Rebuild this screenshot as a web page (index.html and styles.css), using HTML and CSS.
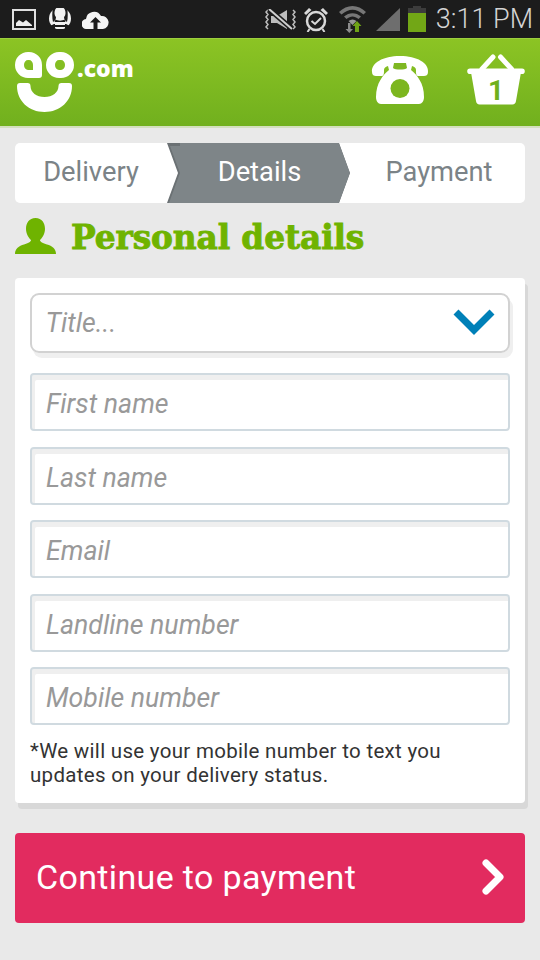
FILE: index.html
```html
<!DOCTYPE html>
<html lang="en">
<head>
<meta charset="utf-8">
<title>Personal details</title>
<link rel="stylesheet" href="styles.css">
</head>
<body>
<div class="status">
  <div class="status-left">
    <svg class="ic-pic" viewBox="0 0 24 21"><rect x="1" y="1" width="22" height="19" fill="none" stroke="#e0e0e0" stroke-width="2"/><path d="M4 17v-3l3-3 4 2.500 3-2.500 6 5v1z" fill="#eee"/></svg>
    <svg class="ic-voice" viewBox="0 0 24 21"><circle cx="12" cy="10.500" r="11" fill="#f2f2f2"/><path d="M5 0h3c-2 3-2 7 0 9 0 2-1 4-3 5-1-4-1-10 0-14zM19 0h-3c2 3 2 7 0 9 0 2 1 4 3 5 1-4 1-10 0-14z" fill="#1c1c1c"/><path d="M7.500 11.500c2 1.500 7 1.500 9 0l1 2.500H6.500z" fill="#1c1c1c"/><path d="M0 19l6-3h1v5H2zM24 19l-6-3h-1v5h5z" fill="#1c1c1c"/><path d="M6 17h12v2H6z" fill="#1c1c1c"/></svg>
    <svg class="ic-up" viewBox="0 0 27 19"><path d="M5 19a5 5 0 0 1-1-10 8 8 0 0 1 15-3 6.500 6.500 0 0 1 2 13z" fill="#f4f4f4"/><path d="M13.500 7l-5.500 5.500h3.500V19h4v-6.500H19z" fill="#1c1c1c"/></svg>
  </div>
  <div class="status-right">
    <svg class="ic-mute" viewBox="0 0 31 21"><path d="M3 1L1 3l2 2.500L1 8l2 2.500L1 13l2 2.500L1 18l2 2M28 1l2 2-2 2.500L30 8l-2 2.500 2 2.500-2 2.500 2 2.500-2 2" fill="none" stroke="#bdbdbd" stroke-width="1.500"/><path d="M6 7h6l10-6v19L12 14H6z" fill="#bdbdbd"/><path d="M4 0l23 20" stroke="#1c1c1c" stroke-width="5"/><path d="M4 0l23 20" stroke="#cfcfcf" stroke-width="2"/></svg>
    <svg class="ic-alarm" viewBox="0 0 24 24"><circle cx="12" cy="13" r="9" fill="none" stroke="#d8d8d8" stroke-width="2.500"/><path d="M7.500 13l3.500 3 6-6" fill="none" stroke="#d8d8d8" stroke-width="2"/><path d="M0 5l5-5 2.500 2-5.500 5zM24 5l-5-5-2.500 2 5.500 5z" fill="#d8d8d8"/><path d="M5.500 21l-2 3M18.500 21l2 3" stroke="#d8d8d8" stroke-width="2"/></svg>
    <svg class="ic-wifi" viewBox="0 0 27 27"><path d="M0 6c8-8 19-8 27 0l-2.500 2.500C17 2 10 2 2.500 8.500z" fill="#777"/><path d="M5 10.500c5-4.500 12-4.500 17 0L19.500 13c-4-3.500-8-3.500-12 0z" fill="#777"/><path d="M9.500 15c2.500-2 5.500-2 8 0l-4 4z" fill="#999"/><path d="M9 17h2.500v6h2.500l-3.700 4-3.800-4H9z" fill="#8c8c8c"/><path d="M18 15l4.500 5H20v6h-4v-6h-2.500z" fill="#6fa317"/></svg>
    <svg class="ic-signal" viewBox="0 0 24 23"><path d="M24 0v23H0z" fill="#6e6e6e"/></svg>
    <div class="battery"><div class="battery-cap"></div><div class="battery-body"></div></div>
    <span class="clock">3:11 PM</span>
  </div>
</div>

<header class="topbar">
  <div class="logo">
    <div class="logo-row">
      <span class="logo-a"></span><span class="logo-o"></span><span class="logo-com">.com</span>
    </div>
    <svg class="smile" viewBox="0 0 55 29"><path d="M3 0h7.500a3 3 0 0 1 3 3c0 6.500 6 11 14 11s14-4.500 14-11a3 3 0 0 1 3-3H52a3 3 0 0 1 3 3c0 15-12 26-27.500 26S0 18 0 3a3 3 0 0 1 3-3z" fill="#fff"/></svg>
  </div>
  <div class="top-icons">
    <svg class="ic-phone" viewBox="0 0 58 48"><path d="M1 16C0 7 12 0 29 0s29 7 28 16c0 3-2 4-4 4h-5c-3 0-3-2-3-6 0-2-1-3-4-4l-1 4c6 5 13 13 13 27 0 4-2 7-5 7H10c-3 0-5-3-5-7 0-14 7-22 13-27l-1-4c-3 1-4 2-4 4 0 4 0 6-3 6H5c-2 0-4-1-4-4z" fill="#fff"/><path d="M22 12c2 2 12 2 14 0l-1-5H23z" fill="#7fb821"/><circle cx="29" cy="32.500" r="9.500" fill="#7cb61f"/></svg>
    <div class="basket">
      <svg class="ic-basket" viewBox="0 0 58 51"><path d="M15 15L26 3M33.500 3L44.500 15" fill="none" stroke="#fff" stroke-width="5" stroke-linecap="round"/><path d="M3 14.500h52a2.800 2.800 0 0 1 0 5.600h-1.300L49 47c-.3 2-1.500 3.500-3.500 3.500h-33C10.500 50.500 9.300 49 9 47L4.300 20.100H3a2.800 2.800 0 0 1 0-5.600z" fill="#fff"/></svg>
      <span class="basket-count">1</span>
    </div>
  </div>
</header>

<main class="page">
  <nav class="steps">
    <div class="step">Delivery</div>
    <div class="step step-current"><span>Details</span></div>
    <div class="step step-last">Payment</div>
  </nav>

  <h1 class="heading">
    <svg class="ic-person" viewBox="0 0 41 36"><path d="M20.500 0C27 0 30 5 30 11c0 5-3 9-5 11 0 2 3 3 7 4.500 5 1.500 9 4 9 9.500H0c0-5.500 4-8 9-9.500 4-1.500 7-2.500 7-4.500-2-2-5-6-5-11C11 5 14 0 20.500 0z" fill="#6fb300"/></svg>
    <span class="heading-text">Personal details</span>
  </h1>

  <form class="card">
    <div class="select"><span>Title...</span>
      <svg class="ic-chevron" viewBox="0 0 42 26"><path d="M3 3l18 18L39 3" fill="none" stroke="#0080b8" stroke-width="7"/></svg>
    </div>
    <input class="field" placeholder="First name">
    <input class="field" placeholder="Last name">
    <input class="field" placeholder="Email">
    <input class="field" placeholder="Landline number">
    <input class="field" placeholder="Mobile number">
    <p class="note">*We will use your mobile number to text you updates on your delivery status.</p>
  </form>

  <button class="continue" type="button">
    <span class="continue-label">Continue to payment</span>
    <svg class="ic-next" viewBox="0 0 24 36"><path d="M4 4l14 14L4 32" fill="none" stroke="#fff" stroke-width="7" stroke-linecap="round" stroke-linejoin="round"/></svg>
  </button>
</main>
</body>
</html>
```
FILE: styles.css
```css
* { box-sizing: border-box; }
html, body { margin: 0; padding: 0; }
body {
  width: 540px;
  height: 960px;
  overflow: hidden;
  background: #e9e9e9;
  font-family: Roboto, "Liberation Sans", sans-serif;
}

/* status bar */
.status {
  height: 38px;
  background: #1c1c1c;
  display: flex;
  justify-content: space-between;
  align-items: center;
  padding: 0 7px 0 12px;
}
.status-left, .status-right { display: flex; align-items: center; }
.ic-pic { width: 24px; height: 21px; }
.ic-voice { width: 24px; height: 21px; margin-left: 12px; margin-top: -2px; }
.ic-up { width: 27px; height: 19px; margin-left: 10px; }
.ic-mute { width: 31px; height: 21px; }
.ic-alarm { width: 24px; height: 24px; margin-left: 8px; margin-top: 2px; }
.ic-wifi { width: 27px; height: 27px; margin-left: 11px; }
.ic-signal { width: 24px; height: 23px; margin-left: 10px; margin-top: 1px; }
.battery { width: 18px; margin-left: 8px; display: flex; flex-direction: column; align-items: center; }
.battery-cap { width: 8px; height: 2px; background: #3c3c3c; }
.battery-body { width: 18px; height: 24px; background: linear-gradient(#3c3c3c 0 5px, #72a716 5px); }
.clock { font-size: 27px; font-weight: 300; color: #d4d4d4; margin-left: 10px; line-height: 38px; }

/* green header */
.topbar {
  height: 90px;
  background: linear-gradient(#8cc424, #71b01e);
  box-shadow: inset 0 1px 0 #9ccf3e;
  border-bottom: 2px solid #d3dfbe;
  display: flex;
  justify-content: space-between;
  padding: 14px 15px 0 15px;
}
.logo { width: 125px; }
.logo-row { display: flex; align-items: flex-end; height: 26px; }
.logo-a, .logo-o {
  width: 27px;
  height: 26px;
  border-style: solid;
  border-color: #fff;
  border-width: 8px 9px;
  border-radius: 13px;
}
.logo-a { border-bottom-right-radius: 3px; }
.logo-o { margin-left: 4px; width: 28px; }
.logo-com {
  font-family: "Open Sans", sans-serif;
  font-weight: 800;
  font-size: 23px;
  line-height: 23px;
  color: #fff;
  margin-left: 3px;
  margin-bottom: -2px;
}
.smile { display: block; width: 55px; height: 29px; margin: 5px 0 0 2px; }
.top-icons { display: flex; align-items: flex-start; }
.ic-phone { width: 58px; height: 48px; margin-top: 4px; }
.basket { width: 58px; margin-left: 38px; position: relative; }
.ic-basket { display: block; width: 58px; height: 51px; margin-top: 2px; }
.basket-count {
  position: absolute;
  left: 0;
  right: 0;
  top: 24px;
  text-align: center;
  font-size: 28px;
  line-height: 30px;
  font-weight: 700;
  color: #6fb01c;
}

/* page */
.page { padding: 15px 15px 0; }
.steps {
  height: 60px;
  background: #fff;
  border-radius: 5px;
  display: flex;
  overflow: hidden;
  color: #7b8387;
  font-size: 27.300px;
}
.step { display: flex; align-items: center; justify-content: center; padding-bottom: 2px; }
.step:first-child { width: 152px; }
.step-current {
  position: relative;
  width: 183px;
  color: #fff;
  background: #6b7174;
  clip-path: polygon(0 0, 172px 0, 183px 50%, 172px 100%, 0 100%, 11px 50%);
  padding-left: 2px;
}
.step-current::before {
  content: "";
  position: absolute;
  inset: 0;
  background: #7e8588;
  clip-path: polygon(13px 0, 172px 0, 183px 50%, 172px 100%, 2px 100%, 13px 50%, 3px 3px, 13px 3px);
}
.step-current span { position: relative; }
.step-last { flex: 1; padding-left: 3px; }

.heading {
  margin: 12px 0 0;
  height: 42px;
  display: flex;
  align-items: center;
  font-family: "DejaVu Serif", serif;
  font-weight: 700;
  font-size: 32.800px;
  color: #6fb300;
  white-space: nowrap;
}
.heading-text { padding-top: 3px; -webkit-text-stroke: 0.9px #6fb300; letter-spacing: -0.1px; }
.ic-person { width: 41px; height: 36px; margin-right: 15px; margin-top: -1px; }

.card {
  margin-top: 21px;
  height: 525px;
  background: #fff;
  border-radius: 4px;
  box-shadow: 3px 6px 0 #d8d8d8;
  padding: 15px;
  display: flex;
  flex-direction: column;
}
.select {
  height: 60px;
  border: 2px solid #d2d2d2;
  border-radius: 9px;
  box-shadow: 3px 5px 0 #efefef;
  display: flex;
  align-items: center;
  justify-content: space-between;
  padding: 0 13px 0 13.500px;
  font-size: 26.700px;
  font-style: italic;
  color: #999;
  margin-bottom: 20px;
}
.ic-chevron { width: 42px; height: 26px; margin-top: -2px; }
.field {
  display: block;
  width: 100%;
  height: 58px;
  flex: none;
  margin: 0 0 15.500px;
  padding: 4px 0 0 14px;
  border: 2px solid #d0dae0;
  border-radius: 4px;
  box-shadow: inset 3px 5px 0 #efefef;
  background: #fff;
  font-family: inherit;
  font-size: 26.700px;
  outline: none;
}
.field::placeholder { color: #999; font-style: italic; opacity: 1; }
.note {
  margin: -2px 0 0;
  max-width: 450px;
  font-size: 20.500px;
  letter-spacing: 0.3px;
  line-height: 24px;
  color: #333;
}

.continue {
  margin-top: 30px;
  width: 100%;
  height: 90px;
  border: 0;
  border-radius: 4px;
  background: #e22b5f;
  color: #fff;
  font-family: inherit;
  font-size: 34px;
  letter-spacing: 0.35px;
  display: flex;
  align-items: center;
  justify-content: space-between;
  padding: 0 19px 0 21px;
}
.continue-label { padding-bottom: 2px; }
.ic-next { width: 24px; height: 36px; margin-top: -3px; }
```
